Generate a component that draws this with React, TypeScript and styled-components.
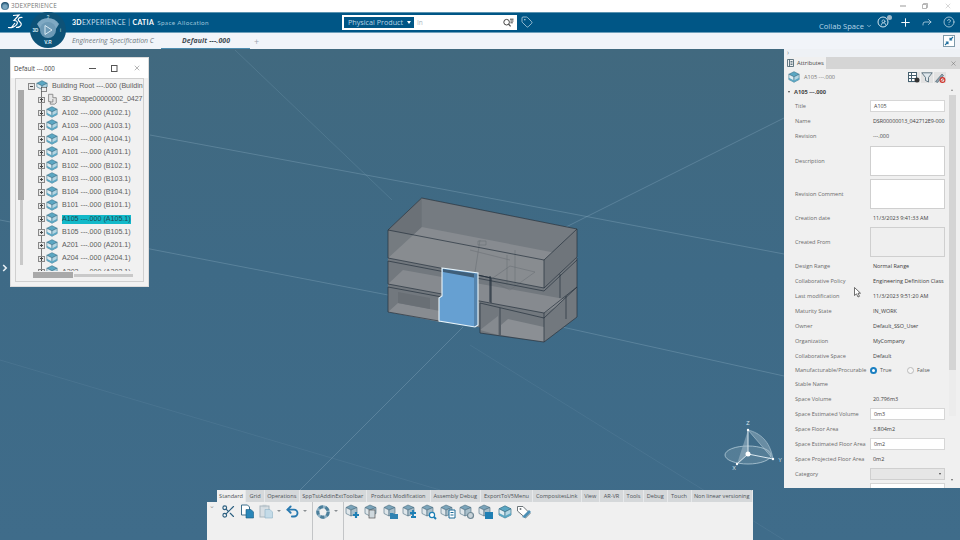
import React from 'react';
import styled, { createGlobalStyle } from 'styled-components';
import { ChevronDown, CircleHelp, Plus, Reply, Scissors, Tag, Undo2, UserRound, X } from 'lucide-react';

const Global = createGlobalStyle`
  html, body { margin: 0; padding: 0; overflow: hidden; background: #3f6b88; }
  * { box-sizing: border-box; }
`;

const Page = styled.div`
  position: relative;
  width: 960px;
  height: 540px;
  display: flex;
  flex-direction: column;
  overflow: hidden;
  font-family: 'Open Sans', 'Liberation Sans', sans-serif;
`;

/* window title */
const TitleBar = styled.div`
  height: 11.5px;
  background: #fff;
  display: flex;
  align-items: center;
  padding: 0 8px 0 1px;
  font-size: 6.4px;
  color: #777;
`;
const TitleDot = styled.div`
  width: 8px;
  height: 8px;
  margin-right: 2px;
  border-radius: 50%;
  background: radial-gradient(circle at 50% 60%, #7aa6bf 0 30%, #1d4f6e 70%);
`;
const TitleText = styled.span`
  flex: 1;
  letter-spacing: 0.1px;
`;
const WinControls = styled.div<{ $gap: number; $color: string }>`
  display: flex;
  align-items: center;
  gap: ${p => p.$gap}px;
  color: ${p => p.$color};
`;

/* blue top bar */
const TopBar = styled.div`
  height: 21.5px;
  background: #005686;
  border-top: 1px solid #5b93b0;
  border-bottom: 1px solid #6fa0bb;
  display: flex;
  align-items: center;
  padding-left: 72px;
  color: #fff;
`;
const Brand = styled.div`
  width: 270px;
  font-family: 'Lato', sans-serif;
  font-size: 6.9px;
  letter-spacing: 0.36px;
  color: #c5dce9;
  white-space: nowrap;
  b { color: #fff; font-weight: 700; }
`;
const BrandApp = styled.span`
  color: #9cc3d9;
  font-size: 6.4px;
  margin-left: 3px;
`;
const SearchBox = styled.div`
  width: 175px;
  height: 15px;
  background: #fff;
  display: flex;
  align-items: center;
  padding: 0 3px 0 2px;
`;
const SearchScope = styled.div`
  width: 70px;
  height: 11px;
  background: #005686;
  color: #b9d5e5;
  font-size: 7.2px;
  display: flex;
  align-items: center;
  justify-content: space-between;
  padding: 0 3px 0 4px;
  white-space: nowrap;
`;
const Caret = styled.span`
  width: 0;
  height: 0;
  border-left: 2.5px solid transparent;
  border-right: 2.5px solid transparent;
  border-top: 3px solid #fff;
`;
const SearchHint = styled.span`
  flex: 1;
  padding-left: 3px;
  font-size: 6.5px;
  color: #a9b5bd;
`;
const TagSlot = styled.div`
  margin-left: 4px;
  display: flex;
  color: #cfe2ee;
`;
const TopRight = styled.div`
  margin-left: auto;
  display: flex;
  align-items: center;
  color: #d4e6f0;
`;
const CollabSpace = styled.div`
  display: flex;
  align-items: center;
  width: 53px;
  margin-top: 8px;
  gap: 2px;
  font-size: 7.6px;
  color: #b7d6e8;
  white-space: nowrap;
`;
const TopIcon = styled.div`
  position: relative;
  width: 22px;
  display: flex;
  justify-content: center;
`;
const Badge = styled.span`
  position: absolute;
  top: -1px;
  right: 2px;
  width: 5px;
  height: 5px;
  border-radius: 50%;
  background: #9db8c8;
`;

/* tab strip */
const TabStrip = styled.div`
  height: 16px;
  background: #f1f4f9;
  display: flex;
  align-items: center;
  padding-left: 72px;
  font-size: 6.9px;
  font-style: italic;
  color: #5b6770;
  white-space: nowrap;
`;
const DocTab = styled.div<{ $active?: boolean }>`
  height: 16px;
  line-height: 15px;
  width: 89px;
  padding-left: ${p => (p.$active ? 21 : 0)}px;
  font-weight: ${p => (p.$active ? 700 : 400)};
  letter-spacing: ${p => (p.$active ? 0.15 : 0)}px;
  color: ${p => (p.$active ? '#3f4a52' : '#6d7880')};
  border-bottom: ${p => (p.$active ? '1.5px solid #4e8db1' : 'none')};
`;
const AddTab = styled.span`
  margin-left: 4px;
  font-style: normal;
  font-size: 9px;
  color: #9aa5ad;
`;
const FullScreen = styled.div`
  margin-left: auto;
  margin-right: 5px;
  width: 12px;
  height: 12px;
  border: 1px solid #7f9aaa;
  background: #fff;
  display: flex;
`;

/* compass over bars */
const Compass = styled.svg`
  position: absolute;
  left: 30px;
  top: 12px;
`;
const BrandLogo = styled.svg`
  position: absolute;
  left: 7px;
  top: 14px;
`;

/* 3D area */
const Viewport = styled.div`
  position: relative;
  flex: 1;
  display: grid;
  grid-template-columns: minmax(0, 1fr) 176px;
  background: linear-gradient(180deg, #41697f 0%, #3e6a86 45%, #3f6c8a 100%);
  overflow: hidden;
`;
const SceneLayer = styled.svg`
  position: absolute;
  inset: 0;
`;
const LeftColumn = styled.div`
  position: relative;
  display: flex;
  flex-direction: column;
  justify-content: flex-end;
  min-width: 0;
`;

/* floating tree window */
const TreeWindow = styled.div`
  position: absolute;
  left: 10px;
  top: 8px;
  width: 139px;
  height: 230px;
  background: #f2f2f2;
  border: 1px solid #dcdcdc;
  display: flex;
  flex-direction: column;
  padding: 0 4px 4px;
`;
const TreeWindowHead = styled.div`
  height: 20px;
  flex: none;
  display: flex;
  align-items: center;
  justify-content: space-between;
  margin: 0 -4px;
  padding: 0 7px 0 3px;
  font-size: 6.2px;
  color: #444;
  background: #fff;
`;
const TreeFrame = styled.div`
  position: relative;
  flex: 1;
  border: 1px solid #d0d0d0;
  background: #f1f1f1;
  display: flex;
  overflow: hidden;
`;
const VScroll = styled.div`
  flex: none;
  width: 6px;
  margin: 11px 0 0 2px;
  display: flex;
  flex-direction: column;
`;
const VThumb = styled.div`
  height: 110px;
  background: #a9a9a9;
`;
const VTrack = styled.div`
  width: 3px;
  height: 65px;
  margin-left: 1.5px;
  background: #c9c9c9;
`;
const TreeList = styled.div`
  position: relative;
  flex: 1;
  height: 193px;
  padding-top: 1px;
  overflow: hidden;
`;
const TreeSpine = styled.div`
  position: absolute;
  left: 17px;
  top: 12px;
  bottom: 0;
  width: 1px;
  background: #777;
`;
const TreeRow = styled.div<{ $root?: boolean }>`
  position: relative;
  height: 13.25px;
  display: flex;
  align-items: center;
  padding-left: ${p => (p.$root ? 4 : 14)}px;
  font-family: 'Liberation Sans', sans-serif;
  font-size: 7.1px;
  color: #5c5c5c;
  white-space: nowrap;
`;
const Expander = styled.span`
  flex: none;
  width: 6.5px;
  height: 6.5px;
  border: 1px solid #888;
  background: #e8e8e8;
  position: relative;
  &::before {
    content: '';
    position: absolute;
    left: 0.5px;
    right: 0.5px;
    top: 1.75px;
    height: 1px;
    background: #444;
  }
`;
const ExpanderPlus = styled(Expander)`
  &::after {
    content: '';
    position: absolute;
    top: 0.5px;
    bottom: 0.5px;
    left: 1.75px;
    width: 1px;
    background: #444;
  }
`;
const TreeIconSlot = styled.span`
  flex: none;
  display: flex;
  margin: -2px 4px 0 1.5px;
`;
const TreeLabel = styled.span<{ $selected?: boolean; $tight?: boolean }>`
  background: ${p => (p.$selected ? '#12b9c9' : 'transparent')};
  color: ${p => (p.$selected ? '#1c4a55' : 'inherit')};
  letter-spacing: ${p => (p.$tight ? -0.12 : 0)}px;
  line-height: 9px;
`;
const HScroll = styled.div`
  position: absolute;
  left: 0;
  right: 0;
  bottom: 0;
  height: 10px;
  background: #f1f1f1;
  padding: 1px 10px 0 17px;
  display: flex;
  align-items: flex-start;
`;
const HThumb = styled.div`
  width: 40px;
  height: 6px;
  background: #a9a9a9;
`;
const HTrack = styled.div`
  flex: 1;
  height: 3px;
  margin: 1.5px 0 0 1px;
  background: #c9c9c9;
`;
const SideHandle = styled.div`
  position: absolute;
  left: 2px;
  top: 215px;
  color: #e8f0f5;
  display: flex;
`;

/* bottom toolbar */
const Toolbar = styled.div`
  margin: 0 31px 0 207px;
  height: 50px;
  display: grid;
  grid-template-columns: 10px minmax(0, 1fr);
  grid-template-rows: 12px 1fr;
`;
const ToolbarEdge = styled.div`
  grid-row: 2;
  background: #f0f0f0;
  color: #999;
  font-size: 7px;
  line-height: 8px;
  text-align: center;
`;
const ToolTabs = styled.div`
  grid-column: 2;
  grid-row: 1;
  background: #d5d8da;
  border-radius: 2px 2px 0 0;
  display: flex;
  align-items: stretch;
  font-size: 5.6px;
  color: #4c5257;
  white-space: nowrap;
`;
const ToolTab = styled.div<{ $w: number; $active?: boolean }>`
  flex: none;
  width: ${p => p.$w}px;
  line-height: 12px;
  text-align: center;
  background: ${p => (p.$active ? '#f0f0f0' : 'transparent')};
  border-right: 1px solid #e6e8ea;
`;
const ToolRow = styled.div`
  grid-column: 2;
  grid-row: 2;
  background: #f0f0f0;
  display: flex;
  align-items: flex-start;
  padding-left: 1.5px;
`;
const ToolCell = styled.div`
  flex: none;
  width: 19px;
  height: 16px;
  margin-top: 1.5px;
  display: flex;
  align-items: center;
  justify-content: center;
`;
const ToolCaret = styled.div`
  flex: none;
  width: 7px;
  margin-top: 8px;
  display: flex;
  justify-content: center;
  &::before {
    content: '';
    border-left: 2px solid transparent;
    border-right: 2px solid transparent;
    border-top: 2px solid #8a8f93;
  }
`;
const ToolDivider = styled.div`
  align-self: stretch;
  width: 1px;
  margin: 0 0 0 3.5px;
  background: #c3c5c7;
`;

/* attributes */
const AttrPanel = styled.aside`
  position: relative;
  height: 439px;
  background: #f0f0f0;
  overflow: hidden;
  display: flex;
  flex-direction: column;
`;
const PanelStrip = styled.div`
  height: 8px;
  flex: none;
  background: #eef1f5;
  color: #888;
  font-size: 7px;
  line-height: 7px;
  padding-left: 3px;
`;
const PanelTabs = styled.div`
  height: 12px;
  flex: none;
  background: #d5d5d5;
  display: flex;
  align-items: stretch;
  justify-content: space-between;
  padding-right: 3px;
`;
const PanelTab = styled.div`
  width: 42px;
  background: #f0f0f0;
  display: flex;
  align-items: center;
  gap: 3px;
  padding-left: 3px;
  font-size: 5.8px;
  color: #444;
`;
const PanelClose = styled.div`
  display: flex;
  align-items: center;
  color: #666;
`;
const PanelHead = styled.div`
  height: 16px;
  flex: none;
  display: flex;
  align-items: center;
  padding: 0 14px 0 4px;
  font-size: 5.6px;
  color: #777;
`;
const HeadName = styled.span`
  flex: 1;
  margin-left: 4px;
`;
const HeadTools = styled.div`
  display: flex;
  gap: 1px;
`;
const HeadTool = styled.span`
  display: flex;
  background: #e2e2e2;
`;
const SectionHead = styled.div`
  height: 13px;
  flex: none;
  display: flex;
  align-items: center;
  padding-left: 4px;
  gap: 4px;
  font-size: 5.7px;
  font-weight: 700;
  color: #444;
`;
const SmallCaret = styled.span`
  border-left: 1.7px solid transparent;
  border-right: 1.7px solid transparent;
  border-top: 2.6px solid #444;
`;
const AttrRow = styled.div<{ $h: number }>`
  flex: none;
  height: ${p => p.$h}px;
  display: grid;
  grid-template-columns: 75px minmax(0, 1fr);
  align-items: center;
  padding: 0 15px 0 11px;
  white-space: nowrap;
`;
const AttrLabel = styled.div`
  font-size: 5.55px;
  color: #6a6a6a;
`;
const AttrValue = styled.div<{ $tight?: boolean }>`
  font-size: 5.45px;
  letter-spacing: ${p => (p.$tight ? -0.08 : 0)}px;
  color: #3d3d3d;
  padding-left: 3px;
  overflow: hidden;
`;
const AttrInput = styled.div`
  height: 12px;
  background: #fff;
  border: 1px solid #d6d6d6;
  font-size: 5.4px;
  color: #444;
  line-height: 10px;
  padding-left: 3px;
`;
const AttrArea = styled.div<{ $disabled?: boolean }>`
  height: 30px;
  background: ${p => (p.$disabled ? '#efefef' : '#fff')};
  border: 1px solid #cfcfcf;
`;
const AttrSelect = styled.div`
  height: 12px;
  background: #e6e6e6;
  border: 1px solid #cfcfcf;
  display: flex;
  align-items: center;
  justify-content: flex-end;
  padding-right: 3px;
`;
const RadioLine = styled.div`
  display: flex;
  align-items: center;
  font-size: 5.4px;
  color: #555;
`;
const Radio = styled.span<{ $on?: boolean }>`
  width: 7px;
  height: 7px;
  border-radius: 50%;
  margin-right: 3px;
  background: ${p => (p.$on ? '#fff' : '#f6f6f6')};
  border: ${p => (p.$on ? '2px solid #1a7fc1' : '1px solid #bbb')};
`;
const RadioName = styled.span`
  width: 27px;
`;
const ScrollRail = styled.div`
  position: absolute;
  left: 165px;
  top: 46px;
  width: 7px;
  height: 321px;
  background: #ececec;
`;
const ScrollThumb = styled.div`
  height: 275px;
  background: #d4d4d4;
`;
const Arrow = styled.span<{ $up?: boolean }>`
  position: absolute;
  left: 167px;
  top: ${p => (p.$up ? 40 : 430)}px;
  border-left: 1.7px solid transparent;
  border-right: 1.7px solid transparent;
  ${p => (p.$up ? 'border-bottom: 2.6px solid #888;' : 'border-top: 2.6px solid #666;')}
`;
const Pointer = styled.svg`
  position: absolute;
  left: 70px;
  top: 238px;
`;

const Cube = ({ size = 12 }: { size?: number }) => (
  <svg width={size} height={size} viewBox="0 0 14 14">
    <path d="M7 .8 13 3.8 7 6.8 1 3.8z" fill="#5aa6c2" stroke="#35708a" strokeWidth=".7" />
    <path d="M1 3.8 7 6.8V13L1 10z" fill="#dfecf1" stroke="#35708a" strokeWidth=".7" />
    <path d="M13 3.8 7 6.8V13L13 10z" fill="#b4d6e3" stroke="#35708a" strokeWidth=".7" />
    <path d="M1 8 7 11 13 8V10L7 13 1 10z" fill="#5aa6c2" />
  </svg>
);

const ShapeIcon = () => (
  <svg width={12} height={12} viewBox="0 0 14 14" fill="#e6e6e6" stroke="#777" strokeWidth=".9">
    <path d="M3 1.5h5v4h4v6l-2 1.5H5v-3H3z" />
    <path d="M5 10.5h3V7" fill="none" />
  </svg>
);

const RootIcon = () => (
  <svg width={12} height={12} viewBox="0 0 14 14">
    <path d="M7 .8 13 3.8 7 6.8 1 3.8z" fill="#5aa6c2" stroke="#35708a" strokeWidth=".7" />
    <path d="M1 3.8 7 6.8V11L1 8z" fill="#dfecf1" stroke="#35708a" strokeWidth=".7" />
    <path d="M13 3.8 7 6.8V11L13 8z" fill="#b4d6e3" stroke="#35708a" strokeWidth=".7" />
    <rect x="6.5" y="8.5" width="6" height="5" fill="#eee" stroke="#444" strokeWidth=".7" />
  </svg>
);

const CopyIcon = () => (
  <svg width={15} height={15} viewBox="0 0 15 15">
    <path d="M1.5 1h6l2 2v8h-8z" fill="#fff" stroke="#3d6f8c" />
    <path d="M6 5.5h5l2.5 2.5v6H6z" fill="#2a86b8" stroke="#155a82" strokeWidth=".6" />
  </svg>
);

const PasteIcon = () => (
  <svg width={15} height={15} viewBox="0 0 15 15">
    <rect x="1" y="2" width="9" height="11" fill="#d8dfe4" stroke="#a9b6be" />
    <rect x="3.5" y=".8" width="4" height="2.4" fill="#bcc7ce" />
    <path d="M6 5.5h5l2.5 2.5v6H6z" fill="#c4dbe8" stroke="#8fb3c7" strokeWidth=".6" />
  </svg>
);

const UpdateIcon = () => (
  <svg width={16} height={16} viewBox="0 0 16 16">
    <circle cx="8" cy="8" r="5.2" fill="none" stroke="#8fb2c6" strokeWidth="3" />
    <circle cx="8" cy="8" r="5.2" fill="none" stroke="#4c7f9b" strokeWidth="3" strokeDasharray="4 2.6" />
  </svg>
);

type ProductKind = 'plus' | 'box' | 'folder' | 'gear' | 'search' | 'list' | 'link' | 'arrow' | 'cube' | 'tag';

const ProductIcon = ({ kind }: { kind: ProductKind }) => {
  if (kind === 'tag') {
    return (
      <svg width={16} height={16} viewBox="0 0 16 16">
        <path d="M1.5 2.5h5.5l7 7-4.5 4.5-8-7z" fill="#fff" stroke="#6c7478" />
        <path d="M6 13 13 6l2 2-6 6z" fill="#4c8fb5" />
        <circle cx="4.5" cy="5" r="1" fill="#6c7478" />
      </svg>
    );
  }
  if (kind === 'cube') return <Cube size={14} />;
  return (
    <svg width={16} height={16} viewBox="0 0 16 16">
      <path d="M6 1 12 3.5 6 6 1 3.5z" fill="#7ba4ba" stroke="#4a6d80" strokeWidth=".6" />
      <path d="M1 3.5 6 6v6L1 9.5z" fill="#dfe6ea" stroke="#4a6d80" strokeWidth=".6" />
      <path d="M12 3.5 6 6v6l6-2.5z" fill="#a9bfcb" stroke="#4a6d80" strokeWidth=".6" />
      {kind === 'plus' && <path d="M11 8v6M8 11h6" stroke="#1d7fb5" strokeWidth="2.2" />}
      {kind === 'box' && <rect x="5" y="6" width="6" height="8" fill="#cfd8dd" stroke="#555" strokeWidth=".7" />}
      {kind === 'folder' && <path d="M7 9h3l1 1h4v5H7z" fill="#2f82b2" />}
      {kind === 'gear' && <path d="M11 6v6M8 9h6M9 13h5" stroke="#1d7fb5" strokeWidth="1.8" />}
      {kind === 'search' && <path d="M13 13l2 2" stroke="#1d7fb5" strokeWidth="2" />}
      {kind === 'search' && <circle cx="11" cy="11" r="2.6" fill="#fff" stroke="#1d7fb5" strokeWidth="1.2" />}
      {kind === 'list' && <path d="M9 6h6v8H9z" fill="#fff" stroke="#1d6b97" strokeWidth="1" />}
      {kind === 'list' && <path d="M10.5 8.5h3M10.5 11h3" stroke="#1d6b97" strokeWidth="1" />}
      {kind === 'link' && <circle cx="11.5" cy="11.5" r="3" fill="#c8d3d9" stroke="#6f8794" strokeWidth="1.2" />}
      {kind === 'arrow' && <rect x="7" y="8" width="8" height="7" fill="#1f7fb4" />}
    </svg>
  );
};

const Scene = () => (
  <SceneLayer width="960" height="491" viewBox="0 49 960 491">
    <g stroke="#8db0c4" strokeOpacity=".5" strokeWidth=".7" fill="none">
      <path d="M150 135 L447 190 L784 254" />
      <path d="M0 220 L388 295" />
      <path d="M544 323 L784 376" />
      <path d="M566 227 L784 118" />
      <path d="M463 327 L300 490" />
      <path d="M235 50 L392 200" strokeOpacity=".3" />
      <path d="M470 345 L784 540" strokeOpacity=".18" />
      <path d="M0 360 L440 490" strokeOpacity=".18" />
    </g>
    {/* whole block behind the floors */}
    <path d="M388 230 421.7 198 577 229V317L544 342 478 327 439 321 388 312z" fill="#72787e" />
    {/* top floor */}
    <path d="M388 230 421.7 198 577 229V257L544 288 388 258z" fill="#757b81" />
    <path d="M388 258 421.7 227 577 257 544 288z" fill="#878b90" />
    <path d="M388 230 421.7 198V227L388 258z" fill="#6b7177" />
    <path d="M544 260 577 229V257L544 288z" fill="#6f757b" />
    <path d="M388 230V258L544 288V260z" fill="#8a8e93" opacity=".35" />
    {/* middle floor */}
    <path d="M388 284 403 270 570 300 544 313z" fill="#868a8f" />
    {/* lower floor */}
    <path d="M388 312 398 303 440 311V322z" fill="#888c91" />
    <path d="M398 292 430 298V309L398 303z" fill="#696f75" />
    <path d="M480 303 544 318 577 287V317L544 342 480 333z" fill="#72787e" />
    <path d="M501 325 508 319 544 327V342L501 335z" fill="#8b8f94" />
    <path d="M480 330 498 316V335z" fill="#858a8f" />
    {/* faint interior */}
    <path d="M490 280 510 266 535 272 510 290zM470 250 510 260M480 240 475 272M507 255V285M515 250V285M478 241H486V245H478z" stroke="#666c72" strokeWidth=".5" fill="none" />
    <g fill="none" stroke="#26323e" strokeWidth=".7">
      <path d="M388 230 421.7 198 577 229 544 260z" />
      <path d="M388 230V258L544 288V260M544 288 577 257V229" />
      <path d="M388 261 544 291 577 260M388 261V284L544 313 577 287V258" />
      <path d="M388 287 442 297M388 287V312L439 321M544 313V342L577 317V287M480 303 544 318 577 287M480 333 544 342M480 303V333M500 308V335" />
      <path d="M478 275 491 278V303M490 276V302" strokeWidth="1" />
      <path d="M560 274V298M566 296V319" />
    </g>
    {/* selected room */}
    <path d="M442 268 478 273V325L475 327 439 321V298L442 296z" fill="#66a0d2" />
    <path d="M443 269 477 274 476 278 443 272z" fill="#3f5f7a" />
    <path d="M474 274V327L478 325V273z" fill="#5584ad" />
    <path d="M442 268 478 273V325L475 327 439 321V298L442 296z" fill="none" stroke="#eaf6fc" strokeWidth="1.1" />
    {/* compass */}
    <g>
      <ellipse cx="748" cy="455" rx="23" ry="9" fill="#7fa0b3" fillOpacity=".35" stroke="#b4cbd8" strokeWidth=".8" />
      <path d="M748 430 773 459 C770 441 760 433 748 430z" fill="#a9c0cd" fillOpacity=".4" stroke="#b4cbd8" strokeWidth=".6" />
      <path d="M748 430 737 464 748 454z" fill="#a9c0cd" fillOpacity=".5" />
      <path d="M748 430V454M748 454 773 459M748 454 737 464" stroke="#dbe8ef" strokeWidth="1" />
      <circle cx="748" cy="454" r="2.5" fill="#fff" />
      <circle cx="748" cy="430" r="1.2" fill="#fff" />
      <circle cx="773" cy="459" r="1.2" fill="#fff" />
      <circle cx="737" cy="464" r="1.2" fill="#fff" />
      <text x="748" y="425" fontSize="5.5" fill="#d7e5ee" textAnchor="middle" fontFamily="Liberation Sans">Z</text>
      <text x="780" y="462" fontSize="5.5" fill="#d7e5ee" textAnchor="middle" fontFamily="Liberation Sans">Y</text>
      <text x="734" y="470" fontSize="5.5" fill="#d7e5ee" textAnchor="middle" fontFamily="Liberation Sans">X</text>
    </g>
  </SceneLayer>
);

const treeItems = [
  'A102 ---.000 (A102.1)',
  'A103 ---.000 (A103.1)',
  'A104 ---.000 (A104.1)',
  'A101 ---.000 (A101.1)',
  'B102 ---.000 (B102.1)',
  'B103 ---.000 (B103.1)',
  'B104 ---.000 (B104.1)',
  'B101 ---.000 (B101.1)',
  'A105 ---.000 (A105.1)',
  'B105 ---.000 (B105.1)',
  'A201 ---.000 (A201.1)',
  'A204 ---.000 (A204.1)',
  'A202 ---.000 (A202.1)',
];

const toolTabs: [string, number][] = [
  ['Standard', 29],
  ['Grid', 19],
  ['Operations', 34.5],
  ['SppTstAddinExtToolbar', 67.5],
  ['Product Modification', 63.5],
  ['Assembly Debug', 50.5],
  ['ExportToV5Menu', 52],
  ['CompositesLink', 48.5],
  ['View', 18.5],
  ['AR-VR', 24],
  ['Tools', 20],
  ['Debug', 23.5],
  ['Touch', 24],
  ['Non linear versioning', 61.5],
];

const productIcons: ProductKind[] = ['plus', 'box', 'folder', 'gear', 'search', 'list', 'link', 'arrow', 'cube', 'tag'];

type Attr = { label: string; h: number; value?: string; tight?: boolean; input?: string; area?: boolean; disabled?: boolean };

const attrsTop: Attr[] = [
  { label: 'Title', h: 15, input: 'A105' },
  { label: 'Name', h: 15, value: 'DSR00000013_042712E9-000', tight: true },
  { label: 'Revision', h: 16, value: '---.000' },
  { label: 'Description', h: 33, area: true },
  { label: 'Revision Comment', h: 33, area: true },
  { label: 'Creation date', h: 15, value: '11/3/2023 9:41:33 AM' },
  { label: 'Created From', h: 33, area: true, disabled: true },
  { label: 'Design Range', h: 15, value: 'Normal Range' },
  { label: 'Collaborative Policy', h: 15, value: 'Engineering Definition Class' },
  { label: 'Last modification', h: 15, value: '11/3/2023 9:51:20 AM' },
  { label: 'Maturity State', h: 15, value: 'IN_WORK' },
  { label: 'Owner', h: 15, value: 'Default_SSO_User' },
  { label: 'Organization', h: 15, value: 'MyCompany' },
  { label: 'Collaborative Space', h: 15, value: 'Default' },
];

const attrsBottom: Attr[] = [
  { label: 'Stable Name', h: 14 },
  { label: 'Space Volume', h: 15, value: '20.796m3' },
  { label: 'Space Estimated Volume', h: 15, input: '0m3' },
  { label: 'Space Floor Area', h: 15, value: '3.804m2' },
  { label: 'Space Estimated Floor Area', h: 15, input: '0m2' },
  { label: 'Space Projected Floor Area', h: 15, value: '0m2' },
];

const renderAttr = (a: Attr) => (
  <AttrRow key={a.label} $h={a.h}>
    <AttrLabel>{a.label}</AttrLabel>
    {a.value && <AttrValue $tight={a.tight}>{a.value}</AttrValue>}
    {a.input && <AttrInput>{a.input}</AttrInput>}
    {a.area && <AttrArea $disabled={a.disabled} />}
  </AttrRow>
);

export default function App() {
  return (
    <Page>
      <Global />
      <TitleBar>
        <TitleDot />
        <TitleText>3DEXPERIENCE</TitleText>
        <WinControls $gap={16} $color="#999">
          <svg width="6" height="6" viewBox="0 0 6 6"><path d="M0 3h6" stroke="#999" /></svg>
          <svg width="6" height="6" viewBox="0 0 6 6" fill="none"><path d="M.5 1.500h4v4h-4zM1.500 1.500V.5h4v4h-1" stroke="#999" strokeWidth=".7" /></svg>
          <X size={8} strokeWidth={1.2} />
        </WinControls>
      </TitleBar>

      <TopBar>
        <Brand>
          <b>3D</b>EXPERIENCE | <b>CATIA</b>
          <BrandApp>Space Allocation</BrandApp>
        </Brand>
        <SearchBox>
          <SearchScope>
            Physical Product
            <Caret />
          </SearchScope>
          <SearchHint>In</SearchHint>
          <svg width="11" height="9" viewBox="0 0 11 9" fill="none">
            <circle cx="3.600" cy="4.200" r="2.800" stroke="#444" strokeWidth="1" />
            <path d="M5.600 6.200 7.600 8.400" stroke="#444" strokeWidth="1.200" />
            <path d="M7 1.200h3.500M7.400 3h3.100M7.400 4.800h2.400" stroke="#444" strokeWidth="1" />
          </svg>
        </SearchBox>
        <TagSlot>
          <Tag size={12} strokeWidth={1.4} />
        </TagSlot>
        <TopRight>
          <CollabSpace>
            Collab Space
            <ChevronDown size={8} strokeWidth={2.6} />
          </CollabSpace>
          <TopIcon>
            <svg width="12" height="12" viewBox="0 0 12 12" fill="none">
              <circle cx="6" cy="6" r="5" stroke="#d4e6f0" />
            </svg>
            <UserRound size={7} strokeWidth={2.4} style={{ position: 'absolute', top: 2.5 }} />
            <Badge />
          </TopIcon>
          <TopIcon>
            <Plus size={13} strokeWidth={1.8} color="#fff" />
          </TopIcon>
          <TopIcon>
            <Reply size={12} strokeWidth={1.4} style={{ transform: 'scaleX(-1)' }} />
          </TopIcon>
          <TopIcon>
            <CircleHelp size={12} strokeWidth={1.4} />
          </TopIcon>
        </TopRight>
      </TopBar>

      <TabStrip>
        <DocTab>Engineering Specification C</DocTab>
        <DocTab $active>Default ---.000</DocTab>
        <AddTab>+</AddTab>
        <FullScreen>
          <svg width="10" height="10" viewBox="0 0 10 10" fill="none" stroke="#1f6f9f" strokeWidth="1.100">
            <path d="M1 9 4 6M1.800 6H4V8.200M9 1 6 4M8.200 4H6V1.800" />
          </svg>
        </FullScreen>
      </TabStrip>

      <Compass width="36" height="38" viewBox="0 0 36 38">
        <circle cx="18" cy="18" r="18" fill="#0d5277" />
        <path d="M7 12a13 13 0 0 1 22 0l-5 8H12z" fill="#7fa9c3" />
        <circle cx="18" cy="18" r="8" fill="#6d9ab6" />
        <path d="M15 13.500 22 18 15 22.500z" fill="none" stroke="#d8e9f2" strokeWidth="1" />
        <text x="18" y="7" fontSize="4.500" fill="#dfeef6" textAnchor="middle" fontFamily="Liberation Sans">?</text>
        <text x="5.500" y="20" fontSize="4.500" fontWeight="700" fill="#dfeef6" textAnchor="middle" fontFamily="Liberation Sans">3D</text>
        <text x="30.500" y="20" fontSize="4.500" fill="#dfeef6" textAnchor="middle" fontFamily="Liberation Sans">i</text>
        <text x="18" y="32" fontSize="4.800" fontWeight="700" fill="#dfeef6" textAnchor="middle" fontFamily="Liberation Sans">V.R</text>
      </Compass>
      <BrandLogo width="18" height="16" viewBox="0 0 18 16" fill="none" stroke="#fff" strokeWidth="1.200">
        <path d="M6 1.500 12 1 7 6.500c3 0 4 1.500 3 3.500-1.500 3-6 4-9 3.500M8 9l-4 5 M15.500 3.500C12 3 10 5 12 7c2 2 3.500 3 1 5.500-1 1-2.500 1-4 1" />
      </BrandLogo>

      <Viewport>
        <Scene />
        <LeftColumn>
          <TreeWindow>
            <TreeWindowHead>
              Default ---.000
              <WinControls $gap={15} $color="#555">
                <svg width="7" height="7" viewBox="0 0 7 7"><path d="M0 3.500h7" stroke="#555" /></svg>
                <svg width="7" height="7" viewBox="0 0 7 7" fill="none"><rect x=".5" y=".5" width="5.500" height="6" stroke="#555" /></svg>
                <X size={8} strokeWidth={1.3} />
              </WinControls>
            </TreeWindowHead>
            <TreeFrame>
              <VScroll>
                <VThumb />
                <VTrack />
              </VScroll>
              <TreeList>
                <TreeSpine />
                <TreeRow $root>
                  <Expander />
                  <TreeIconSlot><RootIcon /></TreeIconSlot>
                  <TreeLabel>Building Root ---.000 (Buildin</TreeLabel>
                </TreeRow>
                <TreeRow>
                  <ExpanderPlus />
                  <TreeIconSlot><ShapeIcon /></TreeIconSlot>
                  <TreeLabel $tight>3D Shape00000002_0427</TreeLabel>
                </TreeRow>
                {treeItems.map(item => (
                  <TreeRow key={item}>
                    <ExpanderPlus />
                    <TreeIconSlot><Cube /></TreeIconSlot>
                    <TreeLabel $selected={item.startsWith('A105')}>{item}</TreeLabel>
                  </TreeRow>
                ))}
              </TreeList>
              <HScroll>
                <HThumb />
                <HTrack />
              </HScroll>
            </TreeFrame>
          </TreeWindow>
          <SideHandle>
            <svg width="6" height="8" viewBox="0 0 6 8" fill="none" stroke="currentColor" strokeWidth="1.600"><path d="M1.200 1 4.200 4 1.200 7" /></svg>
          </SideHandle>

          <Toolbar>
            <ToolTabs>
              {toolTabs.map(([name, w], i) => (
                <ToolTab key={name} $w={w} $active={i === 0}>{name}</ToolTab>
              ))}
            </ToolTabs>
            <ToolbarEdge>⌄</ToolbarEdge>
            <ToolRow>
              <ToolCell><Scissors size={15} color="#2b5f80" strokeWidth={1.8} /></ToolCell>
              <ToolCell><CopyIcon /></ToolCell>
              <ToolCell><PasteIcon /></ToolCell>
              <ToolCaret />
              <ToolCell><Undo2 size={15} color="#2a7ab0" strokeWidth={3} /></ToolCell>
              <ToolCaret />
              <ToolDivider />
              <ToolCell><UpdateIcon /></ToolCell>
              <ToolCaret />
              <ToolDivider />
              {productIcons.map(kind => (
                <ToolCell key={kind}><ProductIcon kind={kind} /></ToolCell>
              ))}
            </ToolRow>
          </Toolbar>
        </LeftColumn>

        <AttrPanel>
          <PanelStrip>›</PanelStrip>
          <PanelTabs>
            <PanelTab>
              <svg width="7" height="8" viewBox="0 0 7 8" fill="none" stroke="#3e5866" strokeWidth=".8"><path d="M.5.500h6v7h-6zM2.500.500v7M3.500 2.500h2M3.500 4h2M3.500 5.500h2" /></svg>
              Attributes
            </PanelTab>
            <PanelClose><X size={7} strokeWidth={1.6} /></PanelClose>
          </PanelTabs>
          <PanelHead>
            <Cube />
            <HeadName>A105 ---.000</HeadName>
            <HeadTools>
              <HeadTool>
                <svg width="12" height="11" viewBox="0 0 12 11"><rect x=".5" y=".5" width="8" height="9" fill="#fff" stroke="#46606f" /><path d="M.5 3.500h8M3.500.500v9M.5 6.500h8" stroke="#46606f" /><circle cx="9" cy="8" r="2.500" fill="#333" /></svg>
              </HeadTool>
              <HeadTool>
                <svg width="12" height="11" viewBox="0 0 12 11" fill="#dfe7ec" stroke="#46606f" strokeWidth=".8"><path d="M.8.800h10.400L7.500 5.500V10l-3-1.500v-3z" /></svg>
              </HeadTool>
              <HeadTool>
                <svg width="12" height="11" viewBox="0 0 12 11" fill="none"><path d="M1.500 9.500 8 2l1.500 1.500-6 7z" fill="#8fa3ae" stroke="#46606f" strokeWidth=".6" /><circle cx="8.500" cy="8" r="2.400" stroke="#d3342c" strokeWidth="1.100" /><path d="M6.800 9.700 10.200 6.300" stroke="#d3342c" /></svg>
              </HeadTool>
            </HeadTools>
          </PanelHead>
          <SectionHead>
            <SmallCaret />
            A105 ---.000
          </SectionHead>
          {attrsTop.map(renderAttr)}
          <AttrRow $h={14}>
            <AttrLabel>Manufacturable/Procurable</AttrLabel>
            <RadioLine>
              <Radio $on />
              <RadioName>True</RadioName>
              <Radio />
              False
            </RadioLine>
          </AttrRow>
          {attrsBottom.map(renderAttr)}
          <AttrRow $h={15}>
            <AttrLabel>Category</AttrLabel>
            <AttrSelect><SmallCaret /></AttrSelect>
          </AttrRow>
          <AttrRow $h={15}>
            <span />
            <AttrInput />
          </AttrRow>
          <Arrow $up />
          <ScrollRail>
            <ScrollThumb />
          </ScrollRail>
          <Arrow />
          <Pointer width="7" height="11" viewBox="0 0 7 11">
            <path d="M.5.500V8.500L2.500 6.800 4 10 5.500 9.300 4 6.200H6.500z" fill="#fff" stroke="#333" strokeWidth=".7" />
          </Pointer>
        </AttrPanel>
      </Viewport>
    </Page>
  );
}
